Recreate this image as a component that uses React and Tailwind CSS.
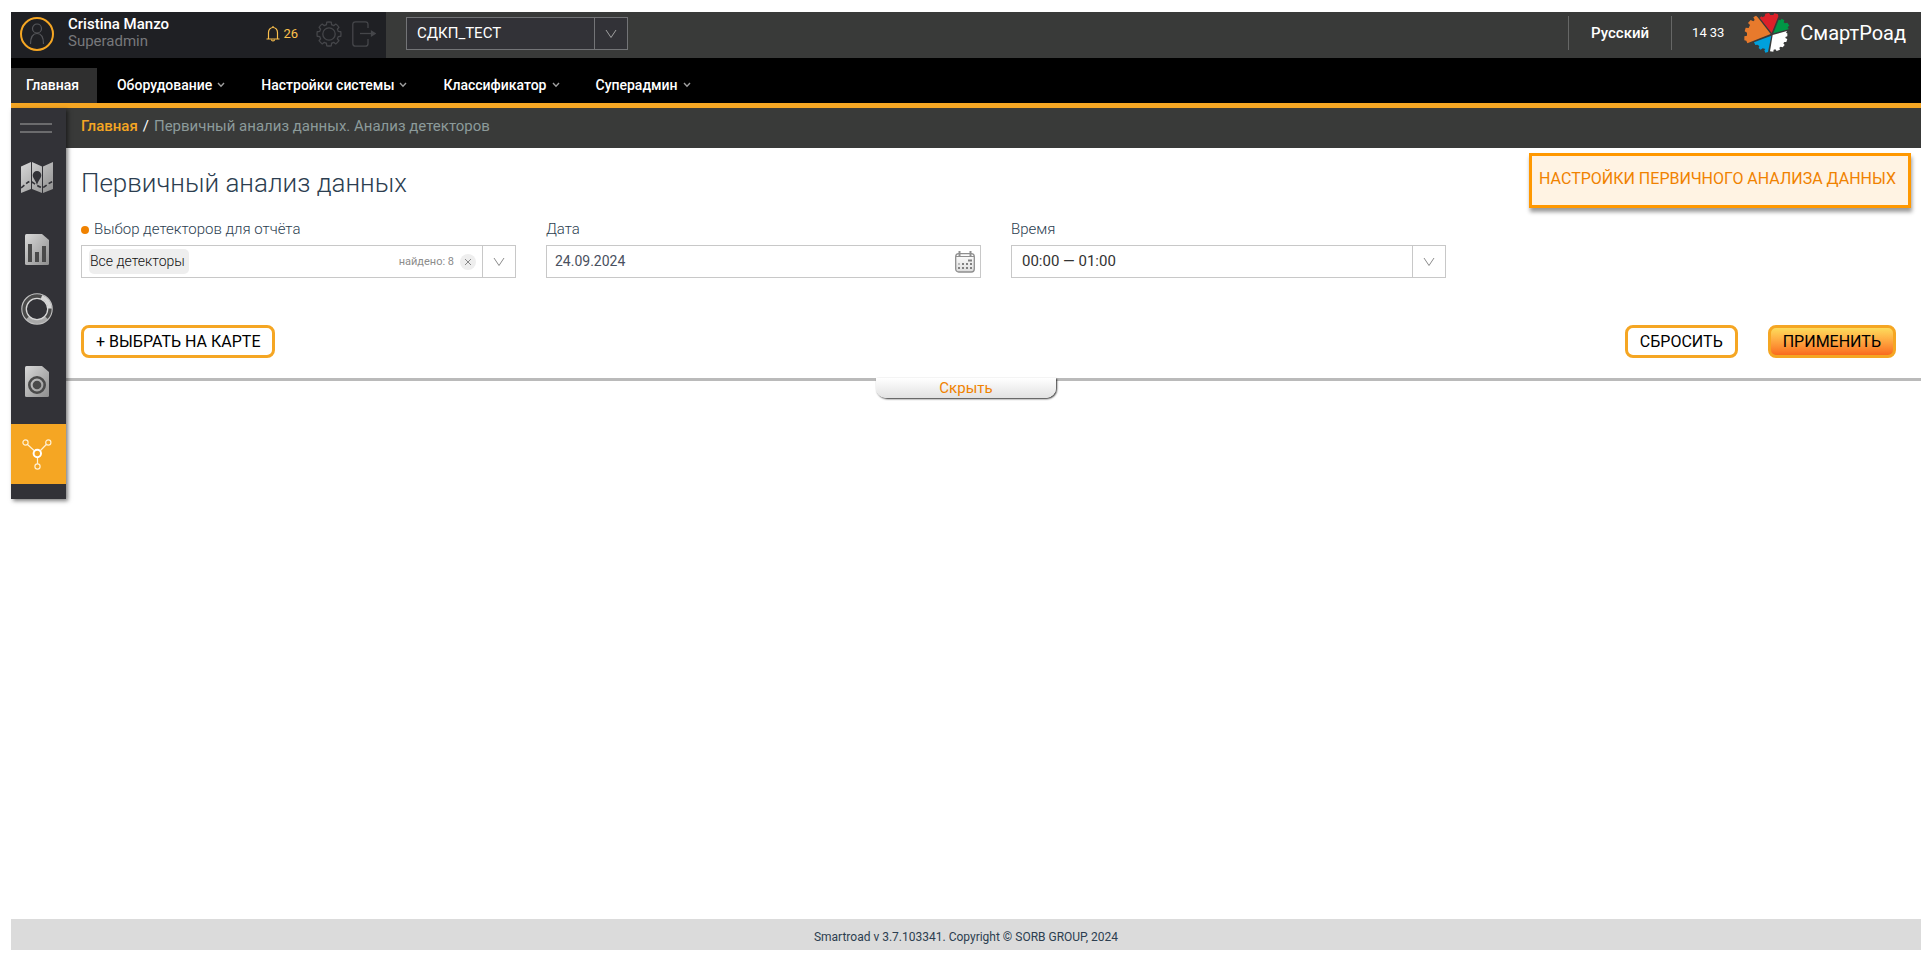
import React from "react";

function Caret({ className }) {
  return (
    <svg viewBox="0 0 12 10" className={className} fill="none" stroke="currentColor" strokeWidth="1">
      <path d="M1 1 L6 8.5 L11 1" />
    </svg>
  );
}

function MenuCaret() {
  return (
    <svg viewBox="0 0 8 6" className="h-[6px] w-[8px] text-[#a0a0a0]" fill="none" stroke="currentColor" strokeWidth="1.4">
      <path d="M1 1 L4 4.2 L7 1" />
    </svg>
  );
}

function Gear() {
  const d = [];
  for (let i = 0; i < 8; i++) {
    const a = (i * Math.PI) / 4 - Math.PI / 2;
    const p = (r, o) => `${(13 + r * Math.cos(a + o)).toFixed(2)} ${(13 + r * Math.sin(a + o)).toFixed(2)}`;
    d.push(`${i ? "L" : "M"}${p(9.6, -0.27)} L${p(12, -0.19)} A12 12 0 0 1 ${p(12, 0.19)} L${p(9.6, 0.27)} A9.6 9.6 0 0 1 ${p(9.6, 0.515)}`);
  }
  return (
    <svg viewBox="0 0 26 26" className="size-[26px]" fill="none" stroke="#45464a" strokeWidth="1.3" strokeLinejoin="round">
      <path d={d.join(" ") + "Z"} />
      <circle cx="13" cy="13" r="6.2" />
    </svg>
  );
}

function Logo() {
  return (
    <svg viewBox="0 0 138 120" className="h-[40px] w-[46px]">
      <path fill="#e87a2c" d="M80 63 L10 91 L7 83 L1 82 L1 70 L9 68 L9 59 L2 55 L5 44 L14 45 L18 36 L12 30 L20 21 L28 25 L32 21 L28 13 L36 8 L41 13Z" />
      <path fill="#dc2129" d="M83 60 L47 14 L53 10 L55 13 L62 10 L64 2 L75 0 L79 6 L88 6 L91 1 L102 4 L103 11 L101 15Z" />
      <path fill="#009846" d="M88 61 L104 20 L109 22 L113 17 L121 22 L119 28 L123 31 L130 29 L136 38 L131 42 L132 46 L136 48Z" />
      <path fill="#fff" d="M86 66 L129 54 L126 60 L130 61 L130 70 L124 72 L125 76 L130 78 L127 87 L121 87 L118 91 L122 96 L116 103 L110 101 L106 104 L108 110 L98 114 L94 109 L89 110 L88 116 L78 115Z" />
      <path fill="#00a0dc" d="M82 68 L72 117 L64 119 L61 112 L64 108 L56 106 L50 110 L44 105 L46 99 L40 95 L34 96 L30 88Z" />
    </svg>
  );
}

function Metal({ id }) {
  return (
    <defs>
      <linearGradient id={id} x1="0" y1="0" x2="1" y2="1">
        <stop offset="0" stopColor="#d8d8d8" />
        <stop offset="1" stopColor="#8e8e8e" />
      </linearGradient>
    </defs>
  );
}

function MapIcon() {
  return (
    <svg viewBox="0 0 32 31" className="h-[31px] w-[32px]">
      <Metal id="m1" />
      <path fill="url(#m1)" d="M0 4.5 L10 0 V27 L0 31Z M11 0 L21 4.5 V31 L11 27Z M22 4.5 L32 0 V27 L22 31Z" />
      <path fill="#323237" d="M16 9 A4.3 4.3 0 0 1 20.3 13.3 C20.3 16 17.5 18 16 23 C14.5 18 11.7 16 11.7 13.3 A4.3 4.3 0 0 1 16 9Z" />
      <path fill="none" stroke="#323237" strokeWidth="1.6" strokeDasharray="4 2.5" d="M0 26 C5 22 8 18 11 20 S18 25 21 25.500 S28 20 32 19.500" />
    </svg>
  );
}

function ChartDocIcon() {
  return (
    <svg viewBox="0 0 24 31" className="h-[31px] w-[24px]">
      <Metal id="m2" />
      <path fill="url(#m2)" d="M1.500 0 H17 L24 6 V29.500 Q24 31 22.500 31 H1.500 Q0 31 0 29.500 V1.500 Q0 0 1.500 0Z" />
      <path fill="#4a4a4a" d="M3 10 H7 V28 H3Z M10 18 H14 V28 H10Z M17 12 H21 V28 H17Z" />
    </svg>
  );
}

function DonutIcon() {
  return (
    <svg viewBox="0 0 32 32" className="size-[32px]" fill="none">
      <circle cx="16" cy="16" r="13" stroke="#4a4a4a" strokeWidth="4" />
      <path stroke="#d4d4d4" strokeWidth="4" d="M20.500 3.800 A13 13 0 0 1 29 15.500" />
      <path stroke="#a8a8a8" strokeWidth="4" d="M25.500 24.800 A13 13 0 0 1 6.500 24.800" />
      <circle cx="16" cy="16" r="15.200" stroke="#c4c4c4" strokeWidth="1.100" />
      <circle cx="16" cy="16" r="10.700" stroke="#d8d8d8" strokeWidth="1.300" />
    </svg>
  );
}

function TargetDocIcon() {
  return (
    <svg viewBox="0 0 24 31" className="h-[31px] w-[24px]">
      <Metal id="m3" />
      <path fill="url(#m3)" d="M1.500 0 H17 L24 6 V29.500 Q24 31 22.500 31 H1.500 Q0 31 0 29.500 V1.500 Q0 0 1.500 0Z" />
      <circle cx="12" cy="19" r="7.700" fill="none" stroke="#4a4a4a" strokeWidth="2.600" />
      <circle cx="12" cy="19" r="4.300" fill="#4a4a4a" />
    </svg>
  );
}

function NodesIcon() {
  return (
    <svg viewBox="0 0 30 31" className="h-[31px] w-[30px]" fill="none" stroke="#fff">
      <g stroke="#fff0d2" strokeWidth="1.200">
        <circle cx="3.500" cy="3.500" r="2.600" />
        <circle cx="26.300" cy="3.500" r="2.600" />
        <circle cx="15.500" cy="27.500" r="2.600" />
        <path d="M5.500 5.500 L12 11.500 M24.300 5.500 L18.500 11.500 M15.500 18.500 V25" />
      </g>
      <circle cx="15.300" cy="14.500" r="3.700" strokeWidth="2" />
    </svg>
  );
}

function CalendarIcon() {
  return (
    <svg viewBox="0 0 20 22" className="h-[22px] w-[20px]">
      <defs>
        <linearGradient id="cal" x1="0" y1="0" x2="0" y2="1">
          <stop offset="0" stopColor="#fff" />
          <stop offset="1" stopColor="#ddd" />
        </linearGradient>
      </defs>
      <rect x=".7" y="2.700" width="18.600" height="18.300" rx="3" fill="url(#cal)" stroke="#8f8f8f" strokeWidth="1.300" />
      <path stroke="#8f8f8f" d="M1 5.500 H19" />
      <path stroke="#8f8f8f" strokeWidth="2" d="M4.500 0 V5 M15.500 0 V5" />
      <path fill="#808080" d="M13 8.500 H17 V10.500 H13Z" />
      <path stroke="#808080" strokeWidth="2" strokeDasharray="2 2" d="M7 13 H17 M3 17 H17" />
      <path stroke="#bbb" strokeWidth="2" d="M3 13 H5" />
    </svg>
  );
}

const menu = ["Оборудование", "Настройки системы", "Классификатор", "Суперадмин"];

const outlineButton =
  "h-[33px] rounded-lg border-[3px] border-[#f5a623] px-3 text-base leading-[27px] text-black";

export default function App() {
  return (
    <div className="flex min-h-screen flex-col bg-white px-[10px] pt-3 pb-[11px] pl-[11px] font-[Roboto,sans-serif] text-[#2c3e50]">
      <header className="flex h-[46px] items-stretch bg-[#393a39]">
        <div className="flex w-[375px] items-center bg-[#1f2024] pr-[10px] pb-[3px] pl-[9px]">
          <span className="flex size-[34px] items-center justify-center rounded-full border-2 border-[#f5a623]">
            <svg viewBox="0 0 16 22" className="h-[22px] w-[16px]" fill="none" stroke="#55565a" strokeWidth="1.200">
              <circle cx="8" cy="5.500" r="4.500" />
              <path d="M1.500 21 C1.500 14 4 10.500 8 10.500 S14.500 14 14.500 21" />
            </svg>
          </span>
          <div className="ml-[14px] flex-1 pb-[2px] text-[15px] leading-[17px]">
            <div className="font-medium text-white">Cristina Manzo</div>
            <div className="text-[#77787b]">Superadmin</div>
          </div>
          <button className="flex items-center gap-[3px] text-[13px] text-[#fcc04d]">
            <svg viewBox="0 0 14 16" className="h-[16px] w-[14px]" fill="none" stroke="currentColor" strokeWidth="1.200">
              <path d="M.5 13 H13.500 M2.500 13 V6.500 A4.500 5 0 0 1 11.500 6.500 V13 M7 0 V1.500" />
              <path d="M5.500 13.500 A1.500 1.500 0 0 0 8.500 13.500" />
            </svg>
            26
          </button>
          <button aria-label="Настройки" className="ml-[18px]">
            <Gear />
          </button>
          <button aria-label="Выход" className="ml-[10px]">
            <svg viewBox="0 0 24 26" className="h-[26px] w-[24px]" fill="none" stroke="#45464a" strokeWidth="1.300">
              <path d="M16 7 V3.500 Q16 .8 13.500 .8 H3.500 Q.8 .8 .8 3.500 V22.500 Q.8 25.200 3.500 25.200 H13.500 Q16 25.200 16 22.500 V18" />
              <path d="M8 12.500 H20" />
              <path fill="#45464a" d="M19.500 10.200 L23.300 12.500 L19.500 14.800Z" />
            </svg>
          </button>
        </div>
        <div className="relative mt-[5px] ml-5 h-[33px] w-[222px] border border-[#737477] bg-[#323237] text-white">
          <select aria-label="Проект" className="h-full w-full appearance-none pl-[10px] text-[15px] text-white outline-none">
            <option>СДКП_ТЕСТ</option>
          </select>
          <span className="pointer-events-none absolute inset-y-0 right-0 flex w-[33px] items-center justify-center border-l border-[#737477] text-[#a0a0a0]">
            <Caret className="h-[10px] w-[12px]" />
          </span>
        </div>
        <div className="ml-auto flex items-center pb-[4px]">
          <button className="h-[34px] border-x border-[#666766] px-[22px] text-[15px] font-medium text-white">Русский</button>
          <time className="ml-5 flex gap-[3px] text-[13px] text-white">
            <span>14</span>
            <span>33</span>
          </time>
          <a href="#" className="mr-[15px] ml-5 flex items-center gap-[10px] text-xl text-white">
            <Logo />
            СмартРоад
          </a>
        </div>
      </header>

      <nav className="flex h-[50px] items-end border-b-[5px] border-[#f5a623] bg-black text-sm font-medium text-white">
        <a href="#" className="flex h-[35px] items-center bg-[#2f2f2f] pr-[18px] pb-[2px] pl-[15px]">Главная</a>
        {menu.map((m) => (
          <button key={m} className="flex h-[35px] items-center gap-[5px] pr-4 pb-[2px] pl-5">
            {m}
            <MenuCaret />
          </button>
        ))}
      </nav>

      <div className="flex flex-1 items-start">
        <aside className="relative z-10 flex w-[55px] shrink-0 flex-col bg-[#323237] pb-[15px] shadow-[2px_2px_4px_rgba(0,0,0,0.5)]">
          <button aria-label="Меню" className="mb-[12px] ml-[9px] flex h-[27px] w-[32px] flex-col justify-end gap-[6px] pb-[2px]">
            <span className="h-[2px] w-full bg-[#6b6b6d]" />
            <span className="h-[2px] w-full bg-[#6b6b6d]" />
          </button>
          <a href="#" aria-label="Карта" className="mb-[12px] flex h-[60px] items-center justify-center pr-[3px]"><MapIcon /></a>
          <a href="#" aria-label="Отчёты" className="flex h-[60px] items-center justify-center pr-[3px]"><ChartDocIcon /></a>
          <a href="#" aria-label="Статистика" className="mb-[12px] flex h-[60px] items-center justify-center pr-[3px]"><DonutIcon /></a>
          <a href="#" aria-label="Журнал" className="mb-[13px] flex h-[60px] items-center justify-center pr-[3px]"><TargetDocIcon /></a>
          <a href="#" aria-label="Анализ детекторов" className="flex h-[60px] items-center justify-center bg-[#f5a623] pr-[3px]"><NodesIcon /></a>
        </aside>

        <main className="min-w-0 flex-1">
          <div className="flex h-[40px] items-center gap-[5px] bg-[#393a39] pb-[4px] pl-[15px] text-[15px]">
            <a href="#" className="font-medium text-[#f5a623]">Главная</a>
            <span className="text-white">/</span>
            <span className="text-[#8c9b9b]">Первичный анализ данных. Анализ детекторов</span>
          </div>

          <section className="border-b-[3px] border-[#bababa] pr-[10px] pb-5 pl-[15px]">
            <div className="flex justify-between pt-[5px]">
              <h1 className="pt-[14px] text-[26px] leading-[32px] font-light">Первичный анализ данных</h1>
              <button className="h-[55px] border-[3px] border-[#ff9800] bg-[#fff3e3] pr-[12px] pb-[4px] pl-[7px] text-base text-[#f08200] shadow-[1px_4px_4px_rgba(0,0,0,0.4)]">
                НАСТРОЙКИ ПЕРВИЧНОГО АНАЛИЗА ДАННЫХ
              </button>
            </div>

            <div className="mt-[10px] grid grid-cols-4 gap-[30px]">
              <div>
                <div id="det" className="flex h-[27px] items-start gap-[5px] text-[15px] leading-[22px] font-light">
                  <span className="mt-[8px] size-[8px] rounded-full bg-[#f08200]" />
                  Выбор детекторов для отчёта
                </div>
                <div role="group" aria-labelledby="det" className="flex h-[33px] items-center border border-[#c8c8c8] pl-[7px]">
                  <span className="flex h-[25px] items-center rounded-[5px] bg-[#eee] pr-[4px] pb-[1px] pl-[1px] text-sm font-light text-[#111]">Все детекторы</span>
                  <span className="mt-[1px] ml-auto text-[11px] text-[#8c8c8c]">найдено: 8</span>
                  <button aria-label="Очистить" className="mx-[6px] flex size-[16px] items-center justify-center rounded-full bg-[#eee] text-[#888]">
                    <svg viewBox="0 0 8 8" className="size-[8px]" stroke="currentColor"><path d="M1 1 L7 7 M7 1 L1 7" /></svg>
                  </button>
                  <button aria-label="Открыть список" className="flex h-full w-[33px] items-center justify-center border-l border-[#c8c8c8] text-[#8c8c8c]">
                    <Caret className="h-[10px] w-[12px]" />
                  </button>
                </div>
              </div>
              <div>
                <label htmlFor="date" className="block h-[27px] text-[15px] leading-[22px] font-light">Дата</label>
                <div className="flex h-[33px] items-center border border-[#c8c8c8] pr-[5px]">
                  <input id="date" defaultValue="24.09.2024" className="min-w-0 flex-1 pb-[1px] pl-[8px] text-sm text-[#495060] outline-none" />
                  <button aria-label="Календарь"><CalendarIcon /></button>
                </div>
              </div>
              <div>
                <label htmlFor="time" className="block h-[27px] text-[15px] leading-[22px] font-light">Время</label>
                <div className="relative h-[33px] border border-[#c8c8c8]">
                  <select id="time" className="h-full w-full appearance-none pl-[10px] text-[15px] text-[#333] outline-none">
                    <option>00:00 — 01:00</option>
                  </select>
                  <span className="pointer-events-none absolute inset-y-0 right-0 flex w-[33px] items-center justify-center border-l border-[#c8c8c8] text-[#8c8c8c]">
                    <Caret className="h-[10px] w-[12px]" />
                  </span>
                </div>
              </div>
            </div>

            <div className="mt-[47px] flex gap-[30px] pr-[15px]">
              <button className={`${outlineButton} mr-auto bg-white`}>+ ВЫБРАТЬ НА КАРТЕ</button>
              <button className={`${outlineButton} bg-white`}>СБРОСИТЬ</button>
              <button className={`${outlineButton} bg-linear-to-b from-[#fcdb5c] to-[#f96a1e]`}>ПРИМЕНИТЬ</button>
            </div>
          </section>
          <div className="-mt-[3px] flex justify-center pr-[55px]">
            <button className="h-[20px] w-[180px] rounded-b-[10px] bg-linear-to-b from-white to-[#e2e2e2] text-[15px] leading-[20px] text-[#f08200] shadow-[1px_1px_2px_rgba(0,0,0,0.8)]">
              Скрыть
            </button>
          </div>
        </main>
      </div>

      <footer className="flex h-[31px] items-center justify-center bg-[#dbdbdb] pt-[4px] text-xs">
        Smartroad v 3.7.103341. Copyright © SORB GROUP, 2024
      </footer>
    </div>
  );
}
